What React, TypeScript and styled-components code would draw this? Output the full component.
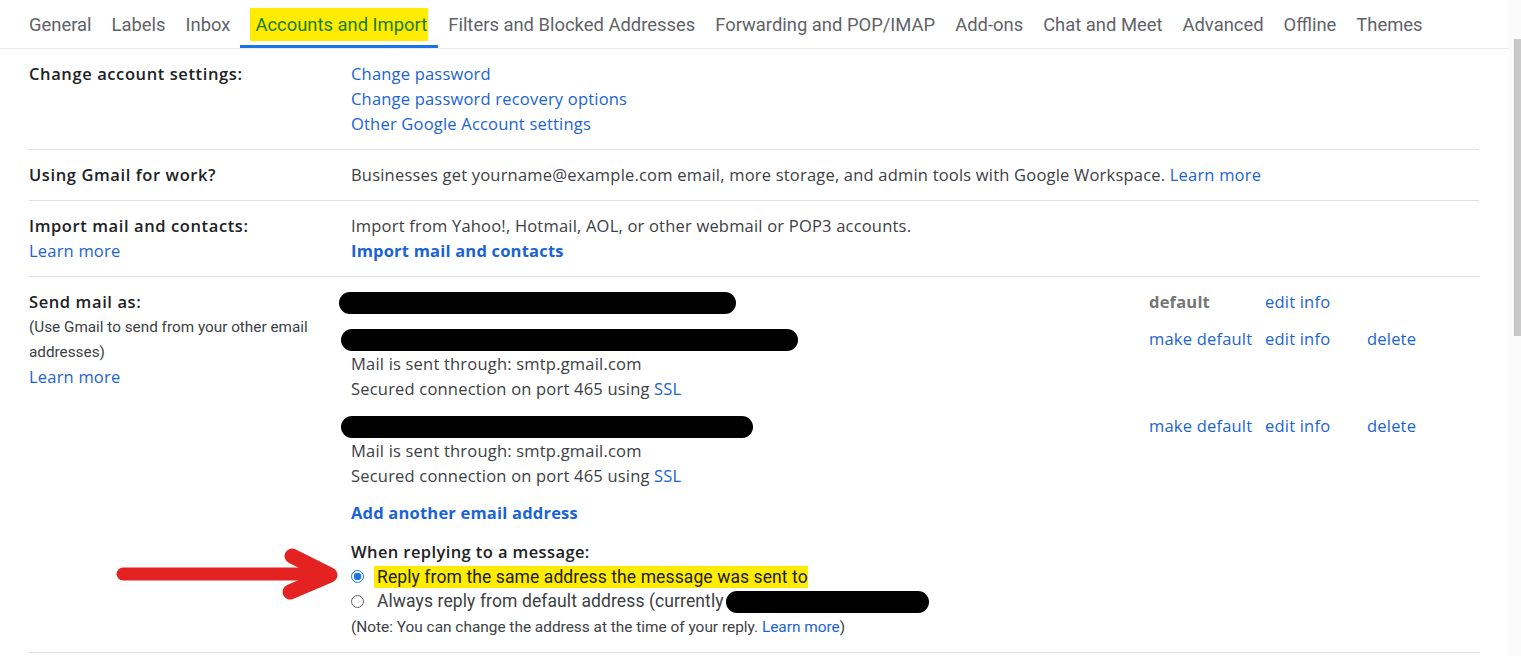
import React from 'react';
import styled, { createGlobalStyle } from 'styled-components';

const GlobalStyle = createGlobalStyle`
  html, body {
    margin: 0;
    padding: 0;
    background: #ffffff;
  }
  body {
    font-family: "Open Sans", "Noto Sans", "Liberation Sans", sans-serif;
    color: #202124;
    font-size: 16.5px;
    letter-spacing: 0.2px;
  }
`;

const Page = styled("div")({
  display: "flex",
  width: 1521,
  height: 656,
  overflow: "hidden",
  position: "relative",
});

const Main = styled("div")({
  width: 1509,
  flexShrink: 0,
});

const ScrollTrack = styled("div")({
  flex: 1,
  background: "#fbfbfb",
  display: "flex",
  justifyContent: "flex-end",
});

const ScrollThumb = styled("div")({
  width: 6,
  height: 297,
  marginTop: 39,
  background: "#c9c9c9",
  borderLeft: "1px solid #bdbdbd",
});

const TabBar = styled("nav")({
  display: "flex",
  paddingLeft: 19,
  height: 48,
  borderBottom: "1px solid #e8ebf0",
  fontFamily: "Roboto, sans-serif",
  letterSpacing: 0,
});

const Tab = styled("div")<{ $active?: boolean }>(({ $active }) => ({
  padding: "0 10px",
  display: "flex",
  alignItems: "center",
  height: 48,
  fontSize: 18.4,
  color: $active ? "#1b7d12" : "#5f6368",
  boxSizing: "border-box",
  borderBottom: $active ? "3px solid #1a73e8" : "none",
  paddingTop: $active ? 3 : 0,
}));

const TabMark = styled("span")({
  background: "#ffec00",
  padding: "6px 1px 6px 5px",
});

const Content = styled("div")({
  margin: "0 0 0 29px",
  width: 1450,
});

const Row = styled("section")({
  display: "grid",
  gridTemplateColumns: "322px 1fr",
  padding: "12px 0 13px",
  borderBottom: "1px solid #e0e0e0",
  lineHeight: "25px",
});

const Label = styled("div")({
  display: "flex",
  flexDirection: "column",
});

const LabelTitle = styled("span")({
  fontWeight: 600,
  letterSpacing: 0.6,
  color: "#202124",
});

const SubNote = styled("span")({
  fontFamily: "Roboto, sans-serif",
  fontSize: 15.3,
  letterSpacing: 0,
  color: "#3c4043",
  maxWidth: 290,
  position: "relative",
  top: 1,
});

const Body = styled("div")({
  display: "flex",
  flexDirection: "column",
});

const Link = styled("a")<{ $bold?: boolean }>(({ $bold }) => ({
  color: "#1a63d6",
  textDecoration: "none",
  fontWeight: $bold ? 700 : 400,
  cursor: "pointer",
}));

const Plain = styled("span")({
  color: "#3c4043",
});

const Entries = styled("div")({
  display: "flex",
  flexDirection: "column",
  gap: 12,
});

const Entry = styled("div")({
  display: "grid",
  gridTemplateColumns: "798px 116px 102px 1fr",
});

const Address = styled("div")({
  display: "flex",
  flexDirection: "column",
});

const AddressLine = styled("div")({
  display: "flex",
  alignItems: "center",
  height: 25,
  paddingTop: 2,
  boxSizing: "border-box",
});

const Redacted = styled("span")<{ $w: number; $shift?: number }>(({ $w, $shift }) => ({
  display: "block",
  flexShrink: 0,
  width: $w,
  height: 22,
  borderRadius: 11,
  background: "#000",
  marginLeft: $shift ?? 0,
}));

const DefaultTag = styled("span")({
  color: "#757575",
  fontWeight: 700,
});

const ReplyBlock = styled("div")({
  display: "flex",
  flexDirection: "column",
  marginTop: 14,
});

const ReplyTitle = styled("span")({
  fontWeight: 600,
  letterSpacing: 0.4,
  color: "#202124",
});

const Option = styled("label")({
  display: "flex",
  alignItems: "center",
  height: 25,
  gap: 13,
  color: "#3c4043",
  fontFamily: "Roboto, sans-serif",
  fontSize: 17.5,
  letterSpacing: 0.1,
});

const OptionText = styled("span")({
  display: "flex",
  alignItems: "center",
});

const Radio = styled("input")({
  appearance: "none",
  margin: 0,
  width: 13,
  height: 13,
  flexShrink: 0,
  borderRadius: "50%",
  border: "1px solid #5f6368",
  boxSizing: "border-box",
  background: "#fff",
  "&:checked": {
    border: "1.5px solid #1a73e8",
    background: "radial-gradient(circle, #1a73e8 0 3.5px, #fff 4px)",
  },
});

const Highlight = styled("span")({
  background: "#ffec00",
  padding: "0 0 0 3px",
  marginLeft: -3,
  lineHeight: "22px",
  color: "#202124",
});

const Note = styled("span")({
  fontFamily: "Roboto, sans-serif",
  fontSize: 15.4,
  letterSpacing: 0,
  color: "#3c4043",
  position: "relative",
  top: 1,
});

const Arrow = styled("svg")({
  position: "absolute",
  left: 110,
  top: 545,
  pointerEvents: "none",
});

const tabs = [
  "General",
  "Labels",
  "Inbox",
  "Accounts and Import",
  "Filters and Blocked Addresses",
  "Forwarding and POP/IMAP",
  "Add-ons",
  "Chat and Meet",
  "Advanced",
  "Offline",
  "Themes",
];

const App: React.FC = () => {
  return (
    <Page>
      <GlobalStyle />
      <Main>
        <TabBar>
          {tabs.map((t) =>
            t === "Accounts and Import" ? (
              <Tab key={t} $active>
                <TabMark>{t}</TabMark>
              </Tab>
            ) : (
              <Tab key={t}>{t}</Tab>
            )
          )}
        </TabBar>
        <Content>
          <Row>
            <Label>
              <LabelTitle>Change account settings:</LabelTitle>
            </Label>
            <Body>
              <Link>Change password</Link>
              <Link>Change password recovery options</Link>
              <Link>Other Google Account settings</Link>
            </Body>
          </Row>
          <Row>
            <Label>
              <LabelTitle>Using Gmail for work?</LabelTitle>
            </Label>
            <Body>
              <Plain>
                Businesses get yourname@example.com email, more storage, and admin tools with Google Workspace.{" "}
                <Link>Learn more</Link>
              </Plain>
            </Body>
          </Row>
          <Row>
            <Label>
              <LabelTitle>Import mail and contacts:</LabelTitle>
              <Link>Learn more</Link>
            </Label>
            <Body>
              <Plain>Import from Yahoo!, Hotmail, AOL, or other webmail or POP3 accounts.</Plain>
              <Link $bold>Import mail and contacts</Link>
            </Body>
          </Row>
          <Row>
            <Label>
              <LabelTitle>Send mail as:</LabelTitle>
              <SubNote>(Use Gmail to send from your other email addresses)</SubNote>
              <Link>Learn more</Link>
            </Label>
            <Body>
              <Entries>
                <Entry>
                  <Address>
                    <AddressLine>
                      <Redacted $w={397} $shift={-12} />
                    </AddressLine>
                  </Address>
                  <DefaultTag>default</DefaultTag>
                  <Link>edit info</Link>
                  <span />
                </Entry>
                <Entry>
                  <Address>
                    <AddressLine>
                      <Redacted $w={457} $shift={-10} />
                    </AddressLine>
                    <Plain>Mail is sent through: smtp.gmail.com</Plain>
                    <Plain>
                      Secured connection on port 465 using <Link>SSL</Link>
                    </Plain>
                  </Address>
                  <Link>make default</Link>
                  <Link>edit info</Link>
                  <Link>delete</Link>
                </Entry>
                <Entry>
                  <Address>
                    <AddressLine>
                      <Redacted $w={412} $shift={-10} />
                    </AddressLine>
                    <Plain>Mail is sent through: smtp.gmail.com</Plain>
                    <Plain>
                      Secured connection on port 465 using <Link>SSL</Link>
                    </Plain>
                  </Address>
                  <Link>make default</Link>
                  <Link>edit info</Link>
                  <Link>delete</Link>
                </Entry>
                <Link $bold>Add another email address</Link>
              </Entries>
              <ReplyBlock>
                <ReplyTitle>When replying to a message:</ReplyTitle>
                <Option>
                  <Radio type="radio" name="reply" defaultChecked />
                  <Highlight>Reply from the same address the message was sent to</Highlight>
                </Option>
                <Option>
                  <Radio type="radio" name="reply" />
                  <OptionText>
                    Always reply from default address (currently
                    <Redacted $w={203} $shift={2} />
                  </OptionText>
                </Option>
                <Note>
                  (Note: You can change the address at the time of your reply. <Link>Learn more</Link>)
                </Note>
              </ReplyBlock>
            </Body>
          </Row>
        </Content>
      </Main>
      <ScrollTrack>
        <ScrollThumb />
      </ScrollTrack>
      <Arrow width="240" height="60" viewBox="110 545 240 60">
        <path
          d="M123 574 L318 574"
          stroke="#e52222"
          strokeWidth="13"
          strokeLinecap="round"
          fill="none"
        />
        <path
          d="M292 556 L330 575 L290 592"
          stroke="#e52222"
          strokeWidth="15"
          strokeLinecap="round"
          strokeLinejoin="round"
          fill="none"
        />
      </Arrow>
    </Page>
  );
};

export default App;
